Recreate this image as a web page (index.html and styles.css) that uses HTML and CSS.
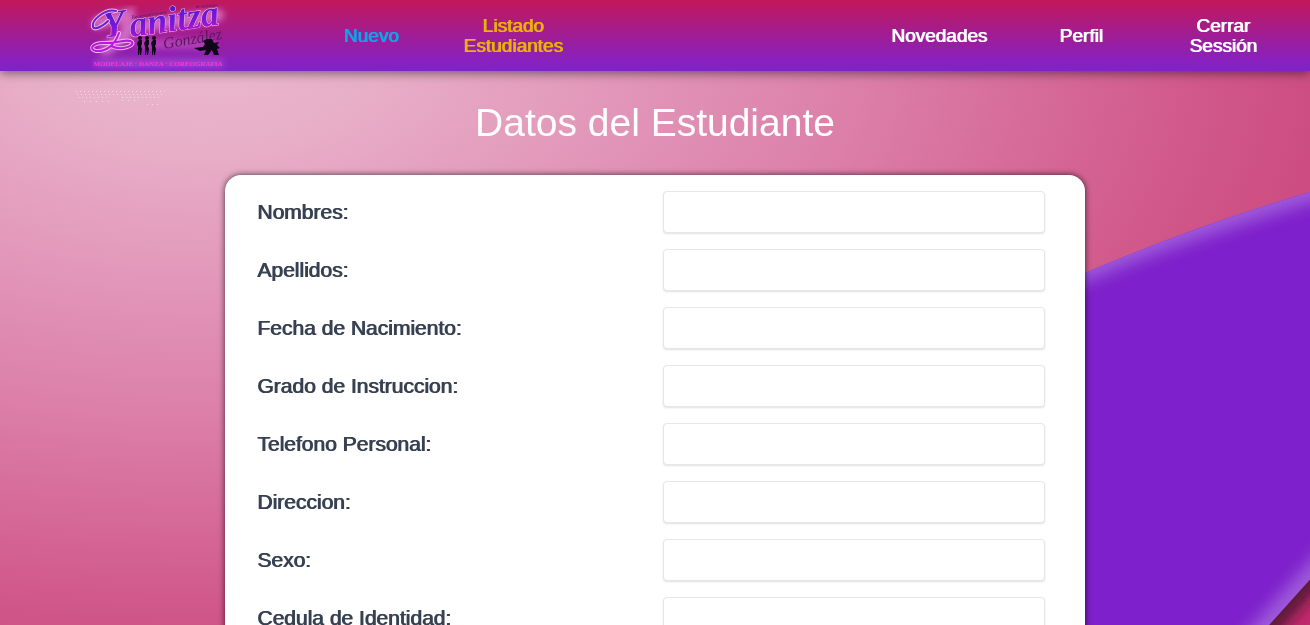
FILE: index.html
```html
<!DOCTYPE html>
<html lang="es">
<head>
<meta charset="utf-8">
<meta name="viewport" content="width=device-width, initial-scale=1">
<title>Datos del Estudiante</title>
<link rel="stylesheet" href="styles.css">
</head>
<body>
<svg class="backdrop" viewBox="0 0 1310 625" preserveAspectRatio="xMaxYMin slice" aria-hidden="true">
  <defs>
    <clipPath id="blob-clip"><path d="M1320 189Q1200 224 1087 272Q900 350 800 470V760H1148L1340 546V180Z"/></clipPath>
    <filter id="soft" x="-20%" y="-20%" width="140%" height="140%"><feGaussianBlur stdDeviation="8"/></filter>
  </defs>
  <path d="M1148 760L1340 546V760Z" fill="#c22b6d"/>
  <path d="M1148 760L1340 546" stroke="#501530" stroke-width="22" filter="url(#soft)"/>
  <path d="M1320 189Q1200 224 1087 272Q900 350 800 470V760H1148L1340 546V180Z" fill="#7e20cb"/>
  <g clip-path="url(#blob-clip)">
    <path d="M1420 158Q1200 220 1087 268Q900 346 780 470" fill="none" stroke="#9f5bda" stroke-width="24" filter="url(#soft)"/>
    <path d="M1148 760L1400 479" fill="none" stroke="#9f5bda" stroke-width="24" filter="url(#soft)"/>
  </g>
  <g fill="none" stroke="#f6d9e6" stroke-width="1" stroke-dasharray="1 3">
    <path d="M76 91.5H167"/><path d="M77 94.5H163"/><path d="M78 97.5H110"/><path d="M122 97.5H160"/>
    <path d="M84 101.5H112" stroke-dasharray="1 5"/><path d="M122 100.5H136" stroke-dasharray="1 5"/><path d="M147 104.5H160" stroke-dasharray="1 4"/>
  </g>
</svg>

<nav class="navbar">
  <a class="brand" href="#" aria-label="Yanitza González">
    <svg class="logo" viewBox="0 0 144 70">
      <defs>
        <linearGradient id="ink" x1="0" y1="0" x2="0" y2="1"><stop offset="0.1" stop-color="#4a18c8"/><stop offset="0.6" stop-color="#7a18d8"/><stop offset="1" stop-color="#d010c8"/></linearGradient>
        <filter id="glow" x="-20%" y="-20%" width="140%" height="140%"><feGaussianBlur stdDeviation="3"/></filter>
      </defs>
      <g fill="none" stroke="#e48adc" stroke-linecap="round" filter="url(#glow)">
        <path d="M12 22L42 14L40 34L20 48M48 26L132 14" stroke-width="12" opacity="0.7"/>
        <path d="M55 43H125" stroke-width="9" opacity="0.35"/>
        <path d="M12 62H134" stroke-width="8" opacity="0.3"/>
      </g>
      <g class="small" fill="#421466">
        <text x="46" y="18" font-size="5" transform="rotate(-9 46 18)">Representaciones</text>
        <text x="110" y="7" font-size="4" transform="rotate(-4 110 7)">de variedades</text>
      </g>
      <g class="script" fill="url(#ink)" stroke="#f0b8ee" stroke-width="1" paint-order="stroke">
        <text x="18" y="37" font-size="38" transform="rotate(-8 18 37)">Y</text>
        <text x="45" y="36" font-size="36" transform="rotate(-8 45 36)">anitza</text>
      </g>
      <g fill="none" stroke-linecap="round">
        <path d="M30 10C20 7 5 19 7 26C9 30 18 24 22 20M33 32C29 44 20 51 10 50C2 48 7 42 17 42C31 43 42 37 46 41C49 45 35 50 25 45" stroke="#f0b8ee" stroke-width="4"/>
        <path d="M30 10C20 7 5 19 7 26C9 30 18 24 22 20" stroke="#6820d0" stroke-width="2"/>
        <path d="M33 32C29 44 20 51 10 50C2 48 7 42 17 42C31 43 42 37 46 41C49 45 35 50 25 45" stroke="#b818d8" stroke-width="2"/>
      </g>
      <text class="surname" x="78" y="48" font-size="16" transform="rotate(-10 78 48)" fill="#5b1760">González</text>
      <g fill="#10061a">
        <g id="model"><circle cx="54" cy="37" r="2"/><path d="M53 39H56L56 43L55 45L56 48L55 54H54V48L53 54H52L52 46L51 42Z"/></g>
        <use href="#model" x="7"/><use href="#model" x="14"/>
        <path d="M121 38L126 38L128 42L133 41L131 44L134 47L131 48L133 54H128L126 49L122 54H118L120 49L114 50L108 47L117 46L119 43L117 40Z"/>
      </g>
      <text class="tagline" x="72" y="65" font-size="7" text-anchor="middle">MODELAJE · DANZA · COREOGRAFIA</text>
    </svg>
  </a>
  <a class="link new" href="#">Nuevo</a>
  <a class="link list" href="#">Listado Estudiantes</a>
  <a class="link news" href="#">Novedades</a>
  <a class="link" href="#">Perfil</a>
  <a class="link" href="#">Cerrar Sessión</a>
</nav>

<main class="content">
  <h1 class="title">Datos del Estudiante</h1>
  <form class="card">
    <div class="row"><label for="nombres">Nombres:</label><input id="nombres" type="text"></div>
    <div class="row"><label for="apellidos">Apellidos:</label><input id="apellidos" type="text"></div>
    <div class="row"><label for="nacimiento">Fecha de Nacimiento:</label><input id="nacimiento" type="text"></div>
    <div class="row"><label for="grado">Grado de Instruccion:</label><input id="grado" type="text"></div>
    <div class="row"><label for="telefono">Telefono Personal:</label><input id="telefono" type="text"></div>
    <div class="row"><label for="direccion">Direccion:</label><input id="direccion" type="text"></div>
    <div class="row"><label for="sexo">Sexo:</label><input id="sexo" type="text"></div>
    <div class="row"><label for="cedula">Cedula de Identidad:</label><input id="cedula" type="text"></div>
  </form>
</main>
</body>
</html>
```
FILE: styles.css
```css
* {
  box-sizing: border-box;
}

body {
  margin: 0;
  min-height: 100vh;
  font-family: "Liberation Sans", Arial, sans-serif;
  background: radial-gradient(ellipse 1300px 720px at 200px 50px, #ebb8cf 0%, #e8aec8 14%, #dc80aa 50%, #d05789 78%, #c83d76 100%) fixed;
}

.backdrop {
  position: fixed;
  inset: 0;
  z-index: -1;
  width: 100%;
  height: 100%;
}

.navbar {
  display: grid;
  grid-template-columns: repeat(9, 1fr);
  align-items: center;
  height: 71px;
  padding: 0 16px;
  background: linear-gradient(#c2185b, #7e22ce);
  box-shadow: 0 2px 10px rgba(0, 0, 0, 0.5);
}

.brand {
  grid-column: span 2;
  display: flex;
  justify-content: center;
}

.logo {
  width: 144px;
  height: 70px;
}

.script,
.surname {
  font-family: "Liberation Serif", serif;
  font-style: italic;
}

.script {
  font-weight: bold;
}

.small {
  font-family: "Liberation Serif", serif;
}

.tagline {
  font-family: "Liberation Serif", serif;
  font-weight: bold;
  fill: #ff30ea;
}

.link {
  justify-self: center;
  max-width: 110px;
  color: #fff;
  font-size: 19px;
  line-height: 20px;
  text-align: center;
  text-decoration: none;
  text-shadow: 1px 0 currentColor;
}

.link:last-child {
  max-width: 80px;
}

.new {
  color: #0ea5e9;
}

.list {
  color: #eab308;
}

.news {
  grid-column: 7;
}

.content {
  display: flex;
  flex-direction: column;
  align-items: center;
  padding: 28px 16px 32px;
}

.title {
  margin: 0 0 28px;
  color: #fff;
  font-size: 39px;
  font-weight: normal;
  line-height: 48px;
}

.card {
  display: grid;
  gap: 16px;
  width: 100%;
  max-width: 860px;
  padding: 16px 40px 16px 32px;
  border-radius: 16px;
  background: #fff;
  box-shadow: 0 0 6px rgba(0, 0, 0, 0.7);
}

.row {
  display: grid;
  grid-template-columns: 1fr 382px;
  align-items: center;
}

.row label {
  color: #374151;
  font-size: 21px;
  line-height: 28px;
  text-shadow: 1px 0 currentColor;
}

.row input {
  width: 100%;
  height: 42px;
  padding: 8px 12px;
  border: 1px solid #e5e7eb;
  border-radius: 4px;
  background: #fff;
  font: inherit;
  box-shadow: 0 1px 2px rgba(0, 0, 0, 0.12);
}

@media (max-width: 800px) {
  .row {
    grid-template-columns: 1fr 1fr;
  }
}
```
